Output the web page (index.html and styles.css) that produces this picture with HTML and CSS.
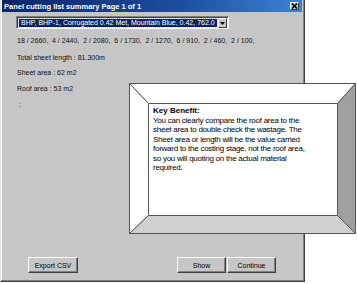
FILE: index.html
```html
<!DOCTYPE html>
<html lang="en">
<head>
    <meta charset="UTF-8">
    <meta name="viewport" content="width=device-width, initial-scale=1.0">
    <title>Panel cutting list summary</title>
    <link rel="stylesheet" href="styles.css">
</head>
<body>
    <div class="window">
        <div class="titlebar">
            <span class="title">Panel cutting list summary Page 1 of 1</span>
            <span class="close-btn">
                <svg width="7" height="6" viewBox="0 0 7 6"><path d="M1 0.5 L6 5.5 M6 0.5 L1 5.5" stroke="#000" stroke-width="1.6"/></svg>
            </span>
        </div>

        <div class="content">
            <div class="combo">
                <div class="combo-value"><span class="combo-selected">BHP, BHP-1, Corrugated 0.42 Met, Mountain Blue, 0.42, 762.0</span></div>
                <div class="combo-btn">
                    <svg width="5" height="3" viewBox="0 0 5 3"><path d="M0 0 H5 L2.5 3 Z" fill="#000"/></svg>
                </div>
            </div>
            <p class="line sizes">18 / 2660,  4 / 2440,  2 / 2080,  6 / 1730,  2 / 1270,  6 / 910,  2 / 460,  2 / 100,</p>
            <p class="line total">Total sheet length : 81.300m</p>
            <p class="line sheet">Sheet area : 62 m2</p>
            <p class="line roof">Roof area : 53 m2</p>
            <p class="line blank">:</p>
        </div>

        <div class="buttons">
            <button class="btn btn-export">Export CSV</button>
            <div class="spacer"></div>
            <button class="btn">Show</button>
            <button class="btn">Continue</button>
        </div>
    </div>

    <!-- Callout frame over the dialog -->
    <div class="callout">
        <svg class="callout-frame" width="227" height="151" viewBox="0 0 227 151">
            <rect x="19.5" y="20.5" width="189" height="112" fill="#fff"/>
            <polygon points="0.5,0.5 226.5,0.5 208.5,20.5 19.5,20.5" fill="#fff" stroke="#555"/>
            <polygon points="0.5,0.5 19.5,20.5 19.5,132.5 0.5,150.5" fill="#fff" stroke="#555"/>
            <polygon points="226.5,0.5 226.5,150.5 208.5,132.5 208.5,20.5" fill="#a0a0a0" stroke="#555"/>
            <polygon points="0.5,150.5 19.5,132.5 208.5,132.5 226.5,150.5" fill="#d0d0d0" stroke="#555"/>
        </svg>
        <div class="callout-text">
            <strong>Key Benefit:</strong><br>
            You can clearly compare the roof area to the<br>
            sheet area to double check the wastage. The<br>
            Sheet area or length will be the value carried<br>
            forward to the costing stage, not the roof area,<br>
            so you will quoting on the actual material<br>
            required.
        </div>
    </div>
</body>
</html>
```

FILE: styles.css
```css
body {
    margin: 0;
    padding: 0;
    background-color: #fff;
    font-family: "Liberation Sans", Arial, sans-serif;
    width: 357px;
    height: 284px;
    position: relative;
    overflow: hidden;
}
.window {
    width: 305px;
    height: 282px;
    box-sizing: border-box;
    background-color: #c6c6c6;
    border-left: 1px solid #e0e0e0;
    border-right: 1px solid #404040;
    border-bottom: 1px solid #404040;
    box-shadow: inset -1px -1px 0 #808080, inset 1px 0 0 #fff;
    padding: 0 2px 0 1px;
    display: flex;
    flex-direction: column;
}
.titlebar {
    height: 12px;
    background: linear-gradient(to right, #0a246a, #1c4fa0 60%, #3c82d4);
    display: flex;
    align-items: center;
    padding: 0 2px 0 2px;
}
.title {
    color: #fff;
    font-weight: bold;
    font-size: 7.5px;
    flex: 1;
    white-space: nowrap;
}
.close-btn {
    width: 9px;
    height: 8px;
    box-sizing: border-box;
    background-color: #c6c6c6;
    border-top: 1px solid #fff;
    border-left: 1px solid #fff;
    border-right: 1px solid #404040;
    border-bottom: 1px solid #404040;
    display: flex;
    align-items: center;
    justify-content: center;
    margin-right: 1px;
}
.content {
    flex: 1;
    padding: 4px 0 0 14px;
}
.combo {
    width: 213px;
    height: 13px;
    box-sizing: border-box;
    display: flex;
    background-color: #fff;
    border-top: 1px solid #808080;
    border-left: 1px solid #808080;
    border-right: 1px solid #fff;
    border-bottom: 1px solid #fff;
    box-shadow: inset 1px 1px 0 #404040;
    padding: 1px 1px 0 1px;
}
.combo-value {
    flex: 1;
    display: flex;
    padding: 1px;
}
.combo-selected {
    flex: 1;
    background-color: #0a246a;
    color: #fff;
    font-size: 7px;
    line-height: 8px;
    padding-left: 2px;
    outline: 1px dotted #c0c0ff;
    white-space: nowrap;
    overflow: hidden;
}
.combo-btn {
    width: 9px;
    height: 10px;
    box-sizing: border-box;
    background-color: #c6c6c6;
    border-top: 1px solid #fff;
    border-left: 1px solid #fff;
    border-right: 1px solid #404040;
    border-bottom: 1px solid #404040;
    display: flex;
    align-items: center;
    justify-content: center;
}
.line {
    margin: 0;
    font-size: 7px;
    line-height: 10px;
    color: #111;
    white-space: pre;
}
.sizes {
    margin-top: 7px;
    padding-left: 1px;
}
.total {
    margin-top: 7px;
    padding-left: 1px;
}
.sheet {
    margin-top: 5px;
    padding-left: 1px;
}
.roof {
    margin-top: 6px;
    padding-left: 1px;
}
.blank {
    margin-top: 6px;
    padding-left: 3px;
}
.buttons {
    display: flex;
    padding: 0 26px 8px 26px;
    gap: 1px;
}
.spacer {
    flex: 1;
}
.btn {
    width: 49px;
    height: 16px;
    box-sizing: border-box;
    padding: 0;
    font-family: "Liberation Sans", Arial, sans-serif;
    font-size: 7px;
    color: #000;
    background-color: #c6c6c6;
    border-top: 1px solid #fff;
    border-left: 1px solid #fff;
    border-right: 1px solid #404040;
    border-bottom: 1px solid #404040;
    box-shadow: inset -1px -1px 0 #808080;
}
.btn-export {
    width: 50px;
}
/* Callout overlay */
.callout {
    position: absolute;
    left: 129px;
    top: 83px;
    width: 227px;
    height: 151px;
}
.callout-frame {
    display: block;
}
.callout-text {
    position: absolute;
    left: 20px;
    top: 21px;
    width: 188px;
    height: 111px;
    box-sizing: border-box;
    padding: 2px 0 0 4px;
    font-size: 8px;
    letter-spacing: -0.25px;
    line-height: 9.5px;
    color: #000;
    white-space: nowrap;
}
.callout-text strong {
    font-weight: bold;
    letter-spacing: 0;
}
```
